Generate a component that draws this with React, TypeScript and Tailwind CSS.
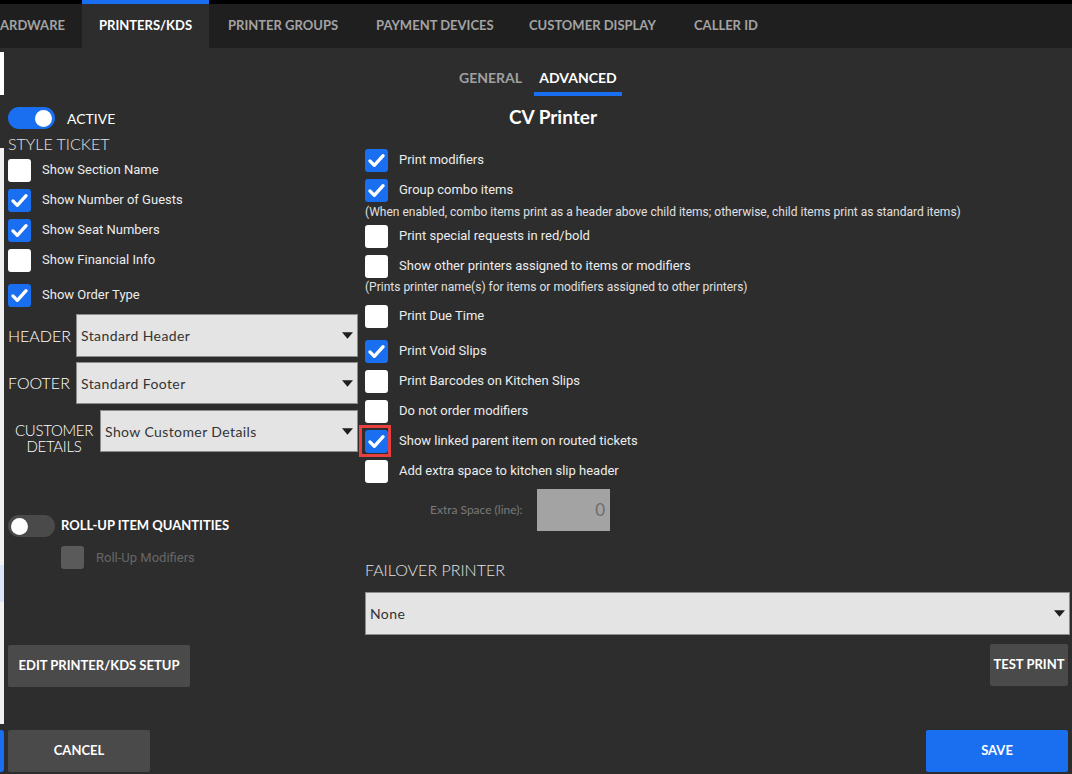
import React from 'react';

const proxima = "font-['Lato','Open_Sans',sans-serif]";
const roboto = "font-['Roboto','Noto_Sans',sans-serif]";

const Check = ({ checked, disabled }: { checked?: boolean; disabled?: boolean }) => {
  if (disabled) return <div className="w-[23px] h-[23px] rounded-[3px] bg-[#5a5a5a] shrink-0" />;
  return (
    <div
      className={`w-[23px] h-[23px] rounded-[3px] shrink-0 flex items-center justify-center ${
        checked ? 'bg-[#1a6ff0]' : 'bg-white'
      }`}
    >
      {checked && (
        <svg viewBox="0 0 24 24" className="w-[21px] h-[21px]" fill="none">
          <path d="M4.5 12.5l5 5L19.5 6.5" stroke="white" strokeWidth="3.8" strokeLinecap="round" strokeLinejoin="round" />
        </svg>
      )}
    </div>
  );
};

const CheckRow = ({ label, checked, className = '', highlight }: { label: string; checked?: boolean; className?: string; highlight?: boolean }) => (
  <div className={`flex items-center h-[30px] ${className}`}>
    <div className="relative">
      <Check checked={checked} />
      {highlight && <div className="absolute -left-[6px] -top-[5px] w-[32px] h-[32px] border-[3px] border-[#e8403f]" />}
    </div>
    <span className={`ml-[11px] text-[13px] text-[#ececec] ${roboto}`}>{label}</span>
  </div>
);

const Caret = () => (
  <svg viewBox="0 0 10 6" className="w-[11px] h-[7px] shrink-0">
    <path d="M0 0h10L5 6z" fill="#1e1e1e" />
  </svg>
);

const Select = ({ value, className = '' }: { value: string; className?: string }) => (
  <div className={`flex items-center justify-between bg-[#e4e4e4] border border-[#8c8c8c] pl-[4px] pr-[4px] ${className}`}>
    <span className={`text-[14px] text-[#333] tracking-[0.4px] ${proxima}`}>{value}</span>
    <Caret />
  </div>
);

const Toggle = ({ on }: { on?: boolean }) => (
  <div className={`w-[47px] h-[22px] rounded-full flex items-center px-[3px] ${on ? 'bg-[#1a6ff0] justify-end' : 'bg-[#4a4a4a] justify-start'}`}>
    <div className="w-[17px] h-[17px] rounded-full bg-white" />
  </div>
);

const tabs = [
  { label: 'ARDWARE', w: 'w-[82px] justify-start' },
  { label: 'PRINTERS/KDS', w: 'w-[127px] justify-center' },
  { label: 'PRINTER GROUPS', w: 'w-[149px] pl-[19px]' },
  { label: 'PAYMENT DEVICES', w: 'w-[153px] pl-[18px]' },
  { label: 'CUSTOMER DISPLAY', w: 'w-[165px] pl-[18px]' },
  { label: 'CALLER ID', w: 'w-[100px] pl-[18px]' },
];

export default function App() {
  return (
    <div className={`w-[1072px] h-[774px] bg-[#2d2d2d] overflow-hidden flex flex-col ${proxima}`}>
      <div className="h-[4px] bg-black" />
      <div className="h-[44px] bg-[#1f1f1f] flex">
        {tabs.map((t, i) => (
          <div
            key={t.label}
            className={`flex items-center text-[13px] font-bold whitespace-nowrap shrink-0 ${t.w} ${
              i === 1 ? 'bg-[#2d2d2d] text-white border-t-[4px] border-[#1a6ff0] -mt-[4px] h-[48px]' : 'h-full text-[#a3a3a3]'
            }`}
          >
            {t.label}
          </div>
        ))}
      </div>
      <div className="flex-1 flex">
        <div className="w-[4px] flex flex-col">
          <div className="h-[4px]" />
          <div className="h-[43px] bg-white" />
          <div className="h-[53px]" />
          <div className="h-[417px] bg-[#f1f1f1]" />
          <div className="h-[37px] bg-[#dbe5f6]" />
          <div className="h-[122px] bg-[#f1f1f1]" />
          <div className="h-[6px]" />
          <div className="h-[42px] bg-[#1a6ff0] rounded-r-[3px]" />
        </div>
        <div className="flex-1 flex flex-col">
          <div className="h-[52px] flex items-start pl-[455px] pt-[20px] gap-[12px]">
            <div className="text-[14px] font-bold text-[#a0a0a0] leading-[20px]">GENERAL</div>
            <div className="flex flex-col items-center">
              <div className="text-[14px] font-bold text-white leading-[20px] px-[5px]">ADVANCED</div>
              <div className="mt-[4px] h-[4px] w-[88px] bg-[#1a6ff0]" />
            </div>
          </div>
          <div className="h-[624px] flex">
            <div className="w-[354px] pl-[4px] flex flex-col">
              <div className="mt-[7px] flex items-center">
                <Toggle on />
                <span className="ml-[12px] text-[14px] text-white">ACTIVE</span>
              </div>
              <div className="mt-[4px] h-[22px] leading-[22px] text-[16px] font-light text-[#e2e2e2]">STYLE TICKET</div>
              <CheckRow label="Show Section Name" />
              <CheckRow label="Show Number of Guests" checked />
              <CheckRow label="Show Seat Numbers" checked />
              <CheckRow label="Show Financial Info" />
              <CheckRow label="Show Order Type" checked className="mt-[5px]" />
              <div className="mt-[4px] flex items-center h-[43px]">
                <span className="w-[68px] text-[16px] font-light text-white">HEADER</span>
                <Select value="Standard Header" className="flex-1 h-full" />
              </div>
              <div className="mt-[5px] flex items-center h-[42px]">
                <span className="w-[68px] text-[16px] font-light text-white">FOOTER</span>
                <Select value="Standard Footer" className="flex-1 h-full" />
              </div>
              <div className="mt-[6px] flex items-start h-[42px]">
                <span className="w-[92px] text-[15px] font-light text-white text-center leading-[16px] pt-[12px] tracking-[-0.3px]">
                  CUSTOMER
                  <br />
                  DETAILS
                </span>
                <Select value="Show Customer Details" className="flex-1 h-full" />
              </div>
              <div className="mt-[63px] flex items-center">
                <Toggle />
                <span className="ml-[6px] text-[13px] font-bold text-white">ROLL-UP ITEM QUANTITIES</span>
              </div>
              <div className="mt-[9px] ml-[53px] flex items-center">
                <Check disabled />
                <span className={`ml-[12px] text-[13px] text-[#676767] ${roboto}`}>Roll-Up Modifiers</span>
              </div>
              <button className="mt-[76px] w-[182px] h-[42px] bg-[#4a4a4a] rounded-[2px] text-[13px] font-bold text-white">
                EDIT PRINTER/KDS SETUP
              </button>
            </div>
            <div className="ml-[7px] w-[705px] flex flex-col">
              <div className="w-[376px] text-center text-[19px] font-bold text-white leading-[22px] mt-[6px]">CV Printer</div>
              <CheckRow label="Print modifiers" checked className="mt-[17px]" />
              <CheckRow label="Group combo items" checked />
              <div className={`h-[14px] leading-[14px] text-[12px] text-[#e0e0e0] ${roboto}`}>
                (When enabled, combo items print as a header above child items; otherwise, child items print as standard items)
              </div>
              <CheckRow label="Print special requests in red/bold" className="mt-[2px]" />
              <CheckRow label="Show other printers assigned to items or modifiers" className="h-[29px]" />
              <div className={`h-[13px] leading-[13px] text-[12px] text-[#e0e0e0] ${roboto}`}>
                (Prints printer name(s) for items or modifiers assigned to other printers)
              </div>
              <CheckRow label="Print Due Time" className="mt-[7px]" />
              <CheckRow label="Print Void Slips" checked className="mt-[5px]" />
              <CheckRow label="Print Barcodes on Kitchen Slips" />
              <CheckRow label="Do not order modifiers" />
              <CheckRow label="Show linked parent item on routed tickets" checked highlight className="h-[29px]" />
              <CheckRow label="Add extra space to kitchen slip header" className="h-[29px]" />
              <div className="mt-[3px] flex items-center">
                <span className="ml-[65px] w-[107px] text-[12px] text-[#7a7a7a]">Extra Space (line):</span>
                <div className="w-[73px] h-[42px] bg-[#a3a3a3] flex items-center justify-end pr-[5px] text-[17px] text-[#6c6c6c]">0</div>
              </div>
              <div className="mt-[30px] h-[18px] leading-[18px] text-[16px] font-light text-[#e2e2e2]">FAILOVER PRINTER</div>
              <Select value="None" className="mt-[13px] h-[43px]" />
              <button className="mt-[9px] self-end mr-[2px] w-[78px] h-[42px] bg-[#4a4a4a] rounded-[2px] text-[13px] font-bold text-white whitespace-nowrap">
                TEST PRINT
              </button>
            </div>
          </div>
          <div className="mt-[6px] h-[42px] flex justify-between pl-[4px] pr-[4px]">
            <button className="w-[142px] h-full bg-[#4a4a4a] rounded-[2px] text-[13px] font-bold text-white">CANCEL</button>
            <button className="w-[142px] h-full bg-[#1a6ff0] rounded-[2px] text-[13px] font-bold text-white">SAVE</button>
          </div>
        </div>
      </div>
    </div>
  );
}
